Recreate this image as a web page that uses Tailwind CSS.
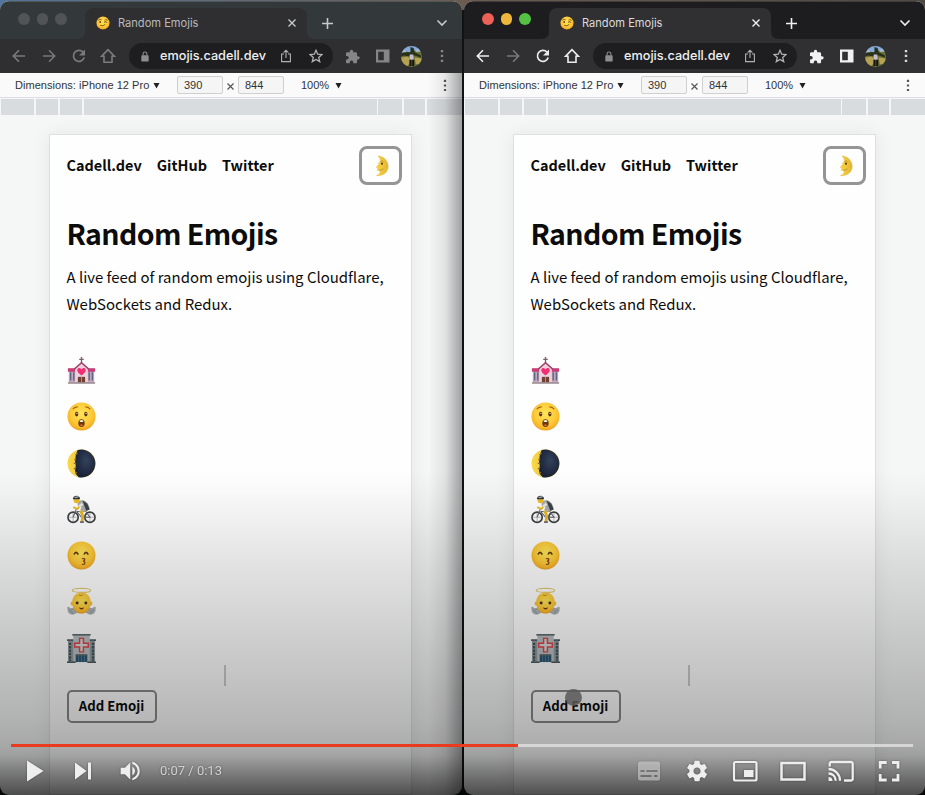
<!DOCTYPE html>
<html lang="en">
<head>
<meta charset="utf-8">
<title>Random Emojis</title>
<script src="https://cdn.jsdelivr.net/npm/@tailwindcss/browser@4"></script>
</head>
<body class="w-[925px] h-[795px] overflow-hidden bg-black">
<svg width="0" height="0" class="absolute">
  <defs>
    <radialGradient id="face" cx=".5" cy=".4" r=".62"><stop offset="0" stop-color="#ffe45a"/><stop offset=".6" stop-color="#fdcb38"/><stop offset=".85" stop-color="#f8b429"/><stop offset="1" stop-color="#e5951a"/></radialGradient>
    <linearGradient id="gold" x1="0" x2="1"><stop offset="0" stop-color="#f8d84a"/><stop offset="1" stop-color="#e3b42c"/></linearGradient>
    <radialGradient id="night" cx=".55" cy=".4" r=".6"><stop offset="0" stop-color="#34425c"/><stop offset="1" stop-color="#182135"/></radialGradient>
    <symbol id="back" viewBox="0 0 16 16"><path d="M14 8H2.5M8 2.3 2.3 8 8 13.700" fill="none" stroke="currentColor" stroke-width="1.6"/></symbol>
    <symbol id="fwd" viewBox="0 0 16 16"><path d="M2 8h11.5M8 2.3 13.7 8 8 13.700" fill="none" stroke="currentColor" stroke-width="1.6"/></symbol>
    <symbol id="reload" viewBox="0 0 16 16"><path d="M13.2 9.6A5.500 5.500 0 1 1 12 4.2" fill="none" stroke="currentColor" stroke-width="1.7"/><path d="M14 1.6v6H8z" fill="currentColor"/></symbol>
    <symbol id="home" viewBox="0 0 16 16"><path d="M8 1.600 1.700 8.200H4v6h8v-6h2.300z" fill="none" stroke="currentColor" stroke-width="1.6"/></symbol>
    <symbol id="lock" viewBox="0 0 10 12"><rect x="1" y="4.5" width="8" height="7" rx="1" fill="currentColor"/><path d="M2.900 5V3.200a2.100 2.100 0 0 1 4.200 0V5" fill="none" stroke="currentColor" stroke-width="1.2"/></symbol>
    <symbol id="share" viewBox="0 0 12 14"><path d="M4 5H1.600v7.600h8.800V5H8M6 9V1.400M3.600 3.600 6 1.200l2.400 2.400" fill="none" stroke="currentColor" stroke-width="1.1"/></symbol>
    <symbol id="star" viewBox="0 0 14 14"><path d="m7 1.300 1.700 3.900 4.200.400-3.200 2.800 1 4.200L7 10.400l-3.700 2.200 1-4.200L1.100 5.600l4.200-.400z" fill="none" stroke="currentColor" stroke-width="1.3"/></symbol>
    <symbol id="puzzle" viewBox="1 0 22 23"><path d="M20.500 11H19V7c0-1.100-.9-2-2-2h-4V3.500a2.500 2.500 0 0 0-5 0V5H4c-1.100 0-2 .9-2 2v3.800h1.500a2.700 2.700 0 0 1 0 5.400H2V20c0 1.100.9 2 2 2h3.800v-1.500a2.700 2.700 0 0 1 5.400 0V22H17c1.100 0 2-.9 2-2v-4h1.500a2.500 2.500 0 0 0 0-5z" fill="currentColor"/></symbol>
    <symbol id="panel" viewBox="0 0 14 14"><path d="M0 .5h13.500v13H0zM2.200 2.700v8.600h5.600V2.700z" fill="currentColor" fill-rule="evenodd"/></symbol>
    <symbol id="dots" viewBox="0 0 4 14"><path d="M.8.900h2.400v2.300H.8zM.8 5.800h2.400v2.300H.8zM.8 10.700h2.400V13H.8z" fill="currentColor"/></symbol>
    <symbol id="avatar" viewBox="0 0 20 20"><clipPath id="ac"><circle cx="10" cy="10" r="10"/></clipPath><g clip-path="url(#ac)"><path fill="#6b7034" d="M0 0h20v20H0z"/><path fill="#86a9e0" d="M0 0h20v5l-4 1-3-2-5 2-4-1-4 2z"/><path fill="#b9bcc9" d="M2 4l3 .5v1L2 6zM14 4l3-1v2l-3 .5z"/><path fill="#27301c" d="M9 1l3 1 1 4 6 3v2l-6-2-5 1-5-1-3 1V7l6-1 3 0z"/><path fill="#b5a353" d="M0 11l7-1 2 6-4 4H0zM13 11l7 1v7l-6-2z"/><path fill="#c8bdcc" d="M8.300 8h3.400l.5 5H8z"/><path fill="#171611" d="M8 13h2v6H8zM10.600 13h2v6h-2z"/></g></symbol>

    <symbol id="wink" viewBox="0 0 30 30"><circle cx="15" cy="15" r="14" fill="url(#face)"/><path d="M5 9q4-3 7-1M18 9q3-2 7 0M9 20q6 3 11-2" fill="none" stroke="#7a4c12" stroke-width="1.800"/><ellipse cx="9" cy="13" rx="2" ry="2.200" fill="#6b4212"/><path d="M17 13.500q3-2 7 0" fill="none" stroke="#6b4212" stroke-width="2"/></symbol>
    <symbol id="moonface" viewBox="0 0 16 24"><path d="M4 1C11 1.500 15.300 6.500 15.300 12.500 15.300 18.500 10 23.200 2.500 22.500 6 21 7 19 6.500 17.200L3.200 16.700l1-1.500-1.200-1.500L2.300 13.200 4.800 10.500C4.500 9 5.800 8.300 6.500 7 7.300 5 6 2.500 4 1z" fill="url(#gold)" stroke="#dcb640" stroke-width=".5"/><circle cx="8.500" cy="9.500" r="1.200" fill="#5b4210"/><path d="M7 7q2-1 3 0M5.500 16.200q3 1 4.500-1" fill="none" stroke="#b58a22" stroke-width=".9"/></symbol>
    <symbol id="church" viewBox="0 0 30 32"><path d="M15 1v8M12.500 3.800h5" stroke="#77646b" stroke-width="1.500"/><path d="M1 14h28v15H1z" fill="#c7a6b9"/><path d="M0 13.500h10v4H0zM20 13.500h10v4H20z" fill="#c83d75"/><path d="M3 18v9M6.500 18v9M23.500 18v9M27 18v9" stroke="#5a6a8c" stroke-width="1.600"/><path d="M8 14l7-6 7 6v15H8z" fill="#efd1de"/><path d="M7 14.500 15 7.500l8 7" fill="none" stroke="#a3406b" stroke-width="1.600"/><path d="M15 21.500c-7-4.500-5-9-1.600-8 1 .3 1.600 1.500 1.600 1.500s.6-1.200 1.600-1.500c3.400-1 5.400 3.500-1.600 8z" fill="#ef2e73"/><path d="M11 23h8v6h-8z" fill="#704032"/><path d="M15 23v6" stroke="#c99a83"/><path d="M0 29h30v1.500H0z" fill="#83767b"/></symbol>
    <symbol id="wow" viewBox="0 0 30 30"><circle cx="15" cy="15" r="14.500" fill="url(#face)"/><ellipse cx="10" cy="12.500" rx="1.700" ry="2.400" fill="#593109"/><ellipse cx="19.500" cy="12.500" rx="1.700" ry="2.400" fill="#593109"/><circle cx="10.300" cy="11.700" r=".7" fill="#fff"/><circle cx="19.800" cy="11.700" r=".7" fill="#fff"/><path d="M6 7.500q2-2.700 5-2.500M19 5q3-.2 5 2.500" fill="none" stroke="#9d6114" stroke-width="1.200"/><ellipse cx="15" cy="21.800" rx="3.300" ry="4" fill="#6b390b"/><path d="M12.800 19.500q2.200-1.800 4.400 0l-.6 1.300h-3.200z" fill="#f3ede1"/><path d="M13.200 24q1.800-1.800 3.600 0l-1.800 1.300z" fill="#cf663b"/></symbol>
    <symbol id="moon" viewBox="0 0 30 30"><circle cx="15" cy="15" r="14.500" fill="url(#gold)"/><path d="M11 1A14.500 14.500 0 1 1 12 29.200Q7.500 25 8.500 20.500q1-3 0-6.500-.5-7 2.500-13z" fill="url(#night)"/><path d="M9 6l2-2M7.500 11l2-.5M7 14.500l2.500 1M7 20l2 .5M8.500 25l2-.5" stroke="#906a24" stroke-width="1.300"/></symbol>
    <symbol id="bike" viewBox="0 0 30 30"><g fill="none" stroke="#3c3d41" stroke-width="1.700"><circle cx="6.300" cy="23" r="5.300"/><circle cx="23.700" cy="23" r="5.300"/></g><path d="M1.500 23h9.600M6.300 18v10M19 23h9.600M23.700 18v10" stroke="#777a7f" stroke-width=".5"/><path d="M6.300 23 9.500 15M10 17h9.500l4.200 6H15L10 17" fill="none" stroke="#62656b" stroke-width="1.100"/><path d="M20 15l-5.500 2.500 1.800 4-.8 6" fill="none" stroke="#e5b521" stroke-width="2.800"/><path d="M11 7c5-3.500 11.500-.5 12.500 7.500L17 17.500l-3.500-2 1.500-2.500-4-2z" fill="#a9adb0"/><path d="M16 5.500l5 3.500 2.500 6-3.500 1.500-2-5z" fill="#3e4146"/><path d="M15 9.500l-4.500 5-4-2" fill="none" stroke="#e5b521" stroke-width="1.900"/><path d="M16 9l-3.500 3" stroke="#e9e9e9" stroke-width="2.600"/><circle cx="9.800" cy="5.500" r="3" fill="#edbd26"/><path d="M6 4.300C6 1.500 8.500.5 10.500.7c2 .2 3.300 2 3 3.800z" fill="#32383d"/><path d="M8 2.600l4-.8" stroke="#d7dadd"/><path d="M13.500 28h4" stroke="#414247" stroke-width="1.400"/></symbol>
    <symbol id="kiss" viewBox="0 0 30 30"><circle cx="15" cy="15" r="14.500" fill="url(#face)"/><path d="M7.200 14q2.200-4.500 4.500 0M17.500 14q2.200-4.500 4.500 0" fill="none" stroke="#593810" stroke-width="1.600"/><path d="M15.500 18.300q3-.6 3 1-.2 1.500-2 1.600 2.200.2 2 1.900-.3 1.700-3 1.400" fill="none" stroke="#8a4b16" stroke-width="1.300"/></symbol>
    <symbol id="angel" viewBox="0 -1 30 30"><path d="M.5 19.500q2 0 3 1.500l6-1h11l6 1q1-1.500 3-1.500c.8 6-2 8.500-6.500 8l-4-2H11l-4 2C2.500 28 0 25.500.5 19.500z" fill="#a9b0b4"/><path d="M3 22l3 5M27 22l-3 5" stroke="#8b9499" stroke-width=".8"/><path d="M15 4.700c6.300 0 9.200 4.600 9.600 9.300 2.500.3 2 4-.5 4.300-1.600 5.300-5.200 8.200-9.100 8.200s-7.500-2.900-9.100-8.200C3.400 18 2.900 14.300 5.400 14c.4-4.700 3.300-9.300 9.600-9.300z" fill="url(#face)"/><ellipse cx="15" cy="2.500" rx="9.500" ry="2" fill="none" stroke="#e0cb78" stroke-width="1.300"/><path d="M12.500 7.500q3 1.500 4-1" fill="none" stroke="#b37c1c" stroke-width=".9"/><circle cx="10.500" cy="15.500" r="1.500" fill="#49300d"/><circle cx="19.500" cy="15.500" r="1.500" fill="#49300d"/><path d="M12 20.300q3 .8 6 0-3 4-6 0z" fill="#703713"/></symbol>
    <symbol id="hospital" viewBox="0 0 30 30"><path d="M1 6h28v23H1z" fill="#8f999c"/><path d="M0 5.500h7v1.700H0zM23 5.500h7v1.700h-7z" fill="#56646a"/><path d="M3.200 9v19M26.800 9v19" stroke="#40535b" stroke-width="2.200" stroke-dasharray="2.500 1"/><path d="M6.500 1h17v28h-17z" fill="#b9bfc1"/><path d="M5.500 0h19v1.700h-19z" fill="#5f6c71"/><path d="M13 4.500h4v5h5v4h-5v5h-4v-5H8v-4h5z" fill="#d4d7d8" stroke="#da4446" stroke-width="1.500"/><path d="M9 22h12v7H9z" fill="#2d5570"/><path d="M9 21h12v1.300H9z" fill="#475459"/><path d="M12 22v7M15 22v7M18 22v7" stroke="#6089a0" stroke-width=".7"/><path d="M0 28.500h9V30H0zM21 28.500h9V30h-9z" fill="#4b5a5f"/></symbol>
  </defs>
</svg>

<main class="relative w-[925px] h-[795px] overflow-hidden bg-linear-to-r from-[#52749c] via-[#6b5b50] to-[#51483f]">
  <div class="absolute inset-x-0 bottom-0 h-[785px] bg-[#101213]"></div>
  <div id="windows" class="relative flex h-full gap-[2px] pt-px"></div>

  <div class="absolute left-[565px] top-[689px] size-[17px] rounded-full bg-[#777]/85"></div>
  <div class="absolute inset-x-0 bottom-0 h-[325px] bg-[linear-gradient(to_bottom,transparent_0,rgb(0_0_0/.02)_20px,rgb(0_0_0/.11)_95px,rgb(0_0_0/.21)_190px,rgb(0_0_0/.28)_250px,rgb(0_0_0/.32)_277px,rgb(0_0_0/.36)_286px,rgb(0_0_0/.51)_303px,rgb(0_0_0/.69)_325px)]"></div>

  <div class="absolute inset-x-0 bottom-0 flex flex-col text-[#eee]">
    <div class="mx-[11px] mr-3 flex h-[3px] bg-[#d6d6d6]"><div class="w-[507px] bg-[#ea3a20]"></div></div>
    <div class="flex h-12 items-center pl-[11px] pr-3 *:[filter:drop-shadow(0_0_1px_rgb(0_0_0/.35))]">
      <svg class="size-12" viewBox="-24 -24 48 48"><path d="M-8-10.500 8.500 0-8 10.500z" fill="currentColor"/></svg>
      <svg class="size-12" viewBox="-24 -24 48 48"><path d="M-8-8.500 3.500 0-8 8.500zM5-8.500h3v17H5z" fill="currentColor"/></svg>
      <svg class="size-12" viewBox="-24 -24 48 48"><path transform="translate(-13.500 -12.700) scale(1.060)" d="M3 9v6h4l5 5V4L7 9H3zm13.500 3c0-1.770-1.020-3.290-2.500-4.030v8.050c1.480-.73 2.500-2.250 2.500-4.020zM14 3.230v2.060c2.890.86 5 3.540 5 6.710s-2.110 5.850-5 6.710v2.060c4.010-.91 7-4.490 7-8.770s-2.990-7.860-7-8.770z" fill="currentColor"/></svg>
      <span class="ml-[5px] grow font-[Roboto,sans-serif] text-[13px] text-[#d0d0d0]">0:07 / 0:13</span>
      <svg class="size-12" viewBox="-24 -24 48 48"><path opacity=".5" fill-rule="evenodd" d="M-9-9.500H9a2 2 0 0 1 2 2v15a2 2 0 0 1-2 2H-9a2 2 0 0 1-2-2v-15a2 2 0 0 1 2-2zM-8.500-1v2h4v-2zM-2.500-1v2H8.500v-2zM-8.500 4v2h11V4zM5 4v2h3.500V4z" fill="currentColor"/></svg>
      <svg class="size-12" viewBox="-24 -24 48 48"><path transform="translate(-12.200 -12.200) scale(1.020)" d="M19.430 12.980c.04-.32.07-.64.07-.98s-.03-.66-.07-.98l2.110-1.650c.19-.15.24-.42.12-.64l-2-3.460c-.12-.22-.39-.3-.61-.22l-2.490 1c-.52-.4-1.080-.73-1.690-.98l-.38-2.650C14.460 2.180 14.250 2 14 2h-4c-.25 0-.46.18-.49.42l-.38 2.650c-.61.25-1.170.59-1.690.98l-2.490-1c-.23-.09-.49 0-.61.22l-2 3.460c-.13.22-.07.49.12.64l2.110 1.650c-.04.32-.07.65-.07.98s.03.66.07.98l-2.110 1.650c-.19.15-.24.42-.12.64l2 3.460c.12.22.39.3.61.22l2.490-1c.52.4 1.080.73 1.690.98l.38 2.650c.03.24.24.42.49.42h4c.25 0 .46-.18.49-.42l.38-2.650c.61-.25 1.170-.59 1.690-.98l2.490 1c.23.09.49 0 .61-.22l2-3.460c.12-.22.07-.49-.12-.64l-2.110-1.650zM12 15.500c-1.930 0-3.500-1.570-3.500-3.500s1.570-3.500 3.500-3.500 3.500 1.570 3.500 3.500-1.570 3.500-3.500 3.500z" fill="currentColor"/></svg>
      <svg class="size-12" viewBox="-24 -24 48 48"><rect x="-11" y="-9" width="22.500" height="18.500" rx="1.500" fill="none" stroke="currentColor" stroke-width="2.200"/><path d="M-1-1H8.500v7H-1z" fill="currentColor"/></svg>
      <svg class="size-12" viewBox="-24 -24 48 48"><path d="M-11.500-8h23V8.500h-23z" fill="none" stroke="currentColor" stroke-width="2.500"/></svg>
      <svg class="size-12" viewBox="-24 -24 48 48"><g fill="none" stroke="currentColor" stroke-width="2.300"><path d="M-11.300-4.500v-3a1.500 1.500 0 0 1 1.500-1.500h20a1.500 1.500 0 0 1 1.500 1.500V8a1.500 1.500 0 0 1-1.500 1.500H3"/><path d="M-12.500-2A11.500 11.500 0 0 1-1 9.700M-12.500 2.500A7 7 0 0 1-5.300 9.700"/></g><path d="M-12.500 6a4 4 0 0 1 4 4h-4z" fill="currentColor"/></svg>
      <svg class="size-12" viewBox="-24 -24 48 48"><path d="M-8.800-2.500V-8.500h6.500M3-8.500h6v6M9 3v6H3M-2.300 9h-6.500V3" fill="none" stroke="currentColor" stroke-width="2.800"/></svg>
    </div>
  </div>
</main>

<script>
const windows = [
  { width: 'w-[462px]', strip: 'bg-[#33393a]', bar: 'bg-[#2f2f31]', flare: 'text-[#2f2f31]', lights: ['bg-[#505456]', 'bg-[#505456]', 'bg-[#505456]'],
    nav: 'text-[#7b7b7d]', tool: 'text-[#858587]', menu: 'text-[#858587]', plus: 'text-[#c5c9ca]', tab: 'text-[#b9babb]',
    shade: 'bg-linear-to-r from-transparent via-black/8 to-black/35' },
  { width: 'w-[461px]', strip: 'bg-[#1d1d1f]', bar: 'bg-[#303033]', flare: 'text-[#303033]', lights: ['bg-[#ec6257]', 'bg-[#f0b73d]', 'bg-[#54c244]'],
    nav: 'text-[#ececed]', tool: 'text-[#f1f1f1]', menu: 'text-[#dadada]', plus: 'text-[#f0f0f0]', tab: 'text-[#dcdcdd]',
    shade: 'hidden' },
];
const emojis = ['church', 'wow', 'moon', 'bike', 'kiss', 'angel', 'hospital'];

document.getElementById('windows').innerHTML = windows.map(w => `
<section class="${w.width} relative flex h-full shrink-0 flex-col overflow-hidden rounded-[9px] bg-[#f5f6f6]">
  <header class="${w.strip} flex h-[38px] shrink-0 items-end border-t border-white/15">
    <div class="flex w-[85px] gap-[7px] self-start pl-[18px] pt-[11px]">
      ${w.lights.map(c => `<i class="${c} size-[11.500px] rounded-full"></i>`).join('')}
    </div>
    <div class="${w.bar} relative flex h-[31px] w-[222px] items-center rounded-t-[8px] pb-px pl-[11px] pr-[10px]">
      <svg class="${w.flare} absolute -left-2 bottom-0 size-2" viewBox="0 0 8 8"><path d="M8 0v8H0q8 0 8-8z" fill="currentColor"/></svg>
      <svg class="${w.flare} absolute -right-2 bottom-0 size-2" viewBox="0 0 8 8"><path d="M0 0v8h8Q0 8 0 0z" fill="currentColor"/></svg>
      <svg class="mr-[8px] size-[14px]"><use href="#wink"/></svg>
      <span class="${w.tab} grow whitespace-nowrap font-[Inter,sans-serif] text-[11.100px]">Random Emojis</span>
      <svg class="${w.plus} size-[10px]" viewBox="0 0 10 10"><path d="m1.500 1.500 7 7m0-7-7 7" stroke="currentColor" stroke-width="1.400"/></svg>
    </div>
    <div class="${w.plus} flex h-[31px] grow items-center justify-between pb-px pl-[14px] pr-[14px]">
      <svg class="size-[13px]" viewBox="0 0 13 13"><path d="M6.500 1v11M1 6.500h11" stroke="currentColor" stroke-width="1.600"/></svg>
      <svg class="size-[12px]" viewBox="0 0 12 12"><path d="m1.500 3.500 4.500 4.500L10.500 3.500" fill="none" stroke="currentColor" stroke-width="1.600"/></svg>
    </div>
  </header>
  <div class="${w.bar} ${w.nav} flex h-[34px] shrink-0 items-center pl-[11px]">
    <svg class="mr-[14px] size-[16px]"><use href="#back"/></svg>
    <svg class="mr-[14px] size-[16px] text-[#77777a]"><use href="#fwd"/></svg>
    <svg class="mr-[13px] size-[16px]"><use href="#reload"/></svg>
    <svg class="mr-[13px] size-[16px]"><use href="#home"/></svg>
    <div class="flex h-[26px] w-[204px] items-center rounded-full bg-[#1e1e20] pl-[11px] text-[#b1b1b3]">
      <svg class="mr-[10px] h-[11px] w-[10px] text-[#8d8d90]"><use href="#lock"/></svg>
      <span class="w-[120px] whitespace-nowrap font-[Inter,sans-serif] text-[12.700px] font-medium text-[#f0f0f0]">emojis.cadell.dev</span>
      <svg class="mr-[17px] h-[14px] w-[12px]"><use href="#share"/></svg>
      <svg class="size-[14px]"><use href="#star"/></svg>
    </div>
    <svg class="${w.tool} ml-[12px] size-[15px]"><use href="#puzzle"/></svg>
    <svg class="${w.tool} ml-[16px] size-[14px]"><use href="#panel"/></svg>
    <svg class="ml-[11px] size-[21px]"><use href="#avatar"/></svg>
    <svg class="${w.menu} ml-[18px] h-[14px] w-[4px]"><use href="#dots"/></svg>
  </div>
  <div class="flex h-[25px] shrink-0 items-center border-b border-[#dcdee1] bg-[#fafafa] pl-[15px] pr-[15px] font-['Liberation_Sans',sans-serif] text-[11px] text-[#333]">
    <span class="w-[138px] whitespace-nowrap tracking-[0.040px]">Dimensions: iPhone 12 Pro</span>
    <svg class="size-[7px]" viewBox="0 0 7 7"><path d="M.5 1h6l-3 5.500z" fill="#222"/></svg>
    <span class="ml-[17px] flex h-[18px] w-[46px] items-center rounded-[2px] border border-[#cfcfcf] bg-[#f5f5f5] pl-[6px]">390</span>
    <svg class="mx-[4px] mt-[3px] size-[7px]" viewBox="0 0 7 7"><path d="m.5.5 6 6m0-6-6 6" stroke="#555" stroke-width="1.200"/></svg>
    <span class="flex h-[18px] w-[46px] items-center rounded-[2px] border border-[#cfcfcf] bg-[#f5f5f5] pl-[6px]">844</span>
    <span class="ml-[17px] w-[34px]">100%</span>
    <svg class="size-[7px]" viewBox="0 0 7 7"><path d="M.5 1h6l-3 5.500z" fill="#222"/></svg>
    <span class="grow"></span>
    <svg class="h-[13px] w-[4px] text-[#555]"><use href="#dots"/></svg>
  </div>
  <div class="mt-px flex h-[16px] shrink-0 gap-[1.500px] pl-px *:bg-[#d8dcdf]">
    <i class="w-[33px]"></i><i class="w-[22.500px]"></i><i class="w-[22.500px]"></i><i class="w-[293px]"></i><i class="w-[24px]"></i><i class="w-[21.500px]"></i><i class="grow"></i>
  </div>
  <div class="flex grow flex-col pl-[49px] pt-[19px]">
    <article class="flex w-[363px] grow flex-col border border-[#e0e0e0] bg-[#fefefe] pl-[16.500px] font-['Noto_Sans_CJK_SC',sans-serif] text-[#0c0c0c] shadow-[0_0_18px_rgb(0_0_0/.07)]">
      <nav class="mt-[11px] flex h-[39px] items-center gap-[15px] text-[14.450px] font-bold *:not-last:-mt-[2px]">
        <span>Cadell.dev</span><span>GitHub</span><span>Twitter</span>
        <span class="ml-auto mr-[9px] flex h-[39px] w-[43px] items-center justify-center rounded-[8px] border-3 border-[#959595] pl-[2px]"><svg class="h-[22px] w-[15px]"><use href="#moonface"/></svg></span>
      </nav>
      <h1 class="mt-[26px] h-[44px] whitespace-nowrap text-[28.500px] leading-[44px] font-bold tracking-[-0.600px]">Random Emojis</h1>
      <p class="mt-[8px] whitespace-nowrap text-[14.950px] leading-[27px]">A live feed of random emojis using Cloudflare,<br>WebSockets and Redux.</p>
      <div class="mt-[39px] flex flex-col gap-[17.300px]">
        ${emojis.map(e => `<svg class="size-[29px]"><use href="#${e}"/></svg>`).join('')}
      </div>
      <div class="ml-[157px] mt-[2px] h-[21px] w-[2px] bg-black/20"></div>
      <span class="mt-[4px] flex h-[33px] w-[90px] items-center justify-center rounded-[5px] border-2 border-[#8a8a8a] text-[13.200px] font-bold">Add Emoji</span>
    </article>
  </div>
  <div class="${w.shade} absolute bottom-0 right-0 top-[72px] w-[34px]"></div>
</section>`).join('');
</script>
</body>
</html>
